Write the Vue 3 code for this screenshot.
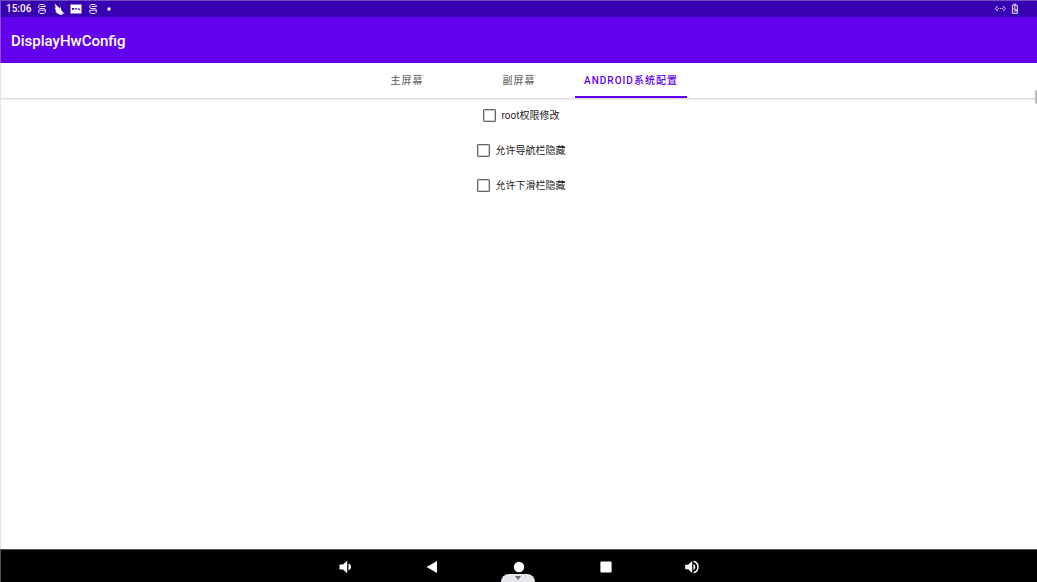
<script setup>
import { ref } from 'vue'

const tabs = ['主屏幕', '副屏幕', 'ANDROID系统配置']
const activeTab = ref(2)
const options = ref([
  { id: 'root', label: 'root权限修改', checked: false },
  { id: 'navbar', label: '允许导航栏隐藏', checked: false },
  { id: 'dropdown', label: '允许下滑栏隐藏', checked: false },
])
</script>

<template>
  <div class="screen">
    <div class="status-bar">
      <div class="status-left">
        <span class="clock">15:06</span>
        <svg class="status-icon" viewBox="0 0 12 12" aria-hidden="true">
          <path d="M9.3 4V2.8L8 1.5H4L2.7 2.8V4.6L4 5.5h4l1.3.9v2.8L8 10.5H4L2.7 9.2V7.2H9M4.6 3.5h4.6" />
        </svg>
        <svg class="status-icon solid" viewBox="0 0 12 12" aria-hidden="true">
          <path d="M1.5.6 7 5.6 7.3 3l1 4.3 3.4 3.6-2.9-.6 1.2 1.4H6l.4-.8H4l.8-.9H2.8l1-.8-1.8-.9 1.4-.3-1.7-1.4 1.4.1L1.3 4.5l1.5.3z" />
        </svg>
        <svg class="status-icon solid" viewBox="0 0 12 12" aria-hidden="true">
          <path fill-rule="evenodd" d="M.5 1.5h11v9H.5zM2 5v2.2h.7V6.3h.8v.9h.7V5zm3 0 .8 2.2h.5L7 5h-.7L6 6l-.3-1zm2.9 0v1.4h1.3v.8h.9V5.8H8.8V5z" />
        </svg>
        <svg class="status-icon" viewBox="0 0 12 12" aria-hidden="true">
          <path d="M9.3 4V2.8L8 1.5H4L2.7 2.8V4.6L4 5.5h4l1.3.9v2.8L8 10.5H4L2.7 9.2V7.2H9M4.6 3.5h4.6" />
        </svg>
        <svg class="status-icon solid" viewBox="0 0 12 12" aria-hidden="true">
          <circle cx="5" cy="6" r="1.7" />
        </svg>
      </div>
      <div class="status-right">
        <svg class="status-icon" viewBox="0 0 12 12" aria-hidden="true">
          <path d="M3.8 3 1.3 5.5 3.8 8M8.8 3l2.5 2.5L8.8 8M3.8 5.5h1.1M5.8 5.5h1M7.7 5.5h1.1" />
        </svg>
        <svg class="status-icon" viewBox="0 0 12 12" aria-hidden="true">
          <path d="M4.4 1.2h2.8M3.4 10.3v-8h4.9v8zM6.3 3.2 4.8 6.2h2.1L5.5 9M6.9 6.4l1.8 2.8" />
        </svg>
      </div>
    </div>

    <header class="app-bar">
      <h1>DisplayHwConfig</h1>
    </header>

    <div class="tabs" role="tablist">
      <button
        v-for="(tab, i) in tabs"
        :key="tab"
        type="button"
        role="tab"
        class="tab"
        :class="{ active: activeTab === i }"
        :aria-selected="activeTab === i"
        @click="activeTab = i"
      >{{ tab }}</button>
    </div>

    <main class="content">
      <label v-for="option in options" :key="option.id" class="option" :for="option.id">
        <input :id="option.id" v-model="option.checked" type="checkbox" />
        <span>{{ option.label }}</span>
      </label>
      <span class="edge-handle"></span>
    </main>

    <nav class="nav-bar">
      <button type="button" aria-label="Volume down">
        <svg viewBox="0 0 18 18"><path d="M3.5 6.5H7L11.2 2.7v12.6L7 11.5H3.5zM12.5 5.6c3.4 1 3.4 5.8 0 6.8z" /></svg>
      </button>
      <button type="button" aria-label="Back">
        <svg viewBox="0 0 18 18"><path d="M14 3v12L3.5 9z" /></svg>
      </button>
      <button type="button" aria-label="Home">
        <svg viewBox="0 0 18 18"><circle cx="9" cy="9" r="5.2" /></svg>
      </button>
      <button type="button" aria-label="Recent apps">
        <svg viewBox="0 0 18 18"><rect x="3.4" y="3.6" width="11.2" height="11" rx="1" /></svg>
      </button>
      <button type="button" aria-label="Volume up">
        <svg viewBox="0 0 18 18">
          <path d="M1.2 6.8h3L8.2 3v12l-4-3.8h-3zM9.4 6c2.6 1 2.6 5 0 6z" />
          <path class="wave" d="M9.6 3.3c5.8 1.6 5.8 9.8 0 11.4" />
        </svg>
      </button>
      <button type="button" class="pull-tab" aria-label="Hide navigation">
        <svg viewBox="0 0 8 6"><path d="M1 1h6L4 5z" /></svg>
      </button>
    </nav>
  </div>
</template>

<style>
body {
  margin: 0;
}
</style>

<style scoped>
.screen {
  box-sizing: border-box;
  display: flex;
  flex-direction: column;
  min-height: 100vh;
  background: #fff;
  color: #222;
  font-family: Roboto, "Noto Sans CJK SC", sans-serif;
  font-size: 10px;
}

.status-bar {
  box-sizing: border-box;
  display: flex;
  align-items: center;
  justify-content: space-between;
  height: 17px;
  padding: 0 16px 0 5px;
  border-top: 1px solid #6e4fc0;
  border-left: 1px solid #6e4fc0;
  background: #3700b3;
  color: #fff;
}

.status-left {
  display: flex;
  align-items: center;
  gap: 5px;
}

.status-right {
  display: flex;
  align-items: center;
  gap: 3px;
}

.clock {
  font-weight: 500;
  line-height: 16px;
}

.status-icon {
  width: 12px;
  height: 12px;
  fill: none;
  stroke: #ebe5f7;
  stroke-width: 1;
}

.status-icon.solid {
  fill: #fff;
  stroke: none;
}

.app-bar {
  box-sizing: border-box;
  display: flex;
  align-items: center;
  height: 46px;
  padding: 2px 10px 0;
  border-left: 1px solid #8a4df3;
  background: #6200ee;
}

h1 {
  margin: 0;
  color: #fff;
  font-size: 15px;
  font-weight: 500;
  line-height: 20px;
}

.tabs {
  position: relative;
  display: flex;
  justify-content: center;
  height: 35px;
  border-left: 1px solid #e2e2e2;
  background: #fff;
  box-shadow: 0 1px 2px rgba(0, 0, 0, 0.2);
}

.tab {
  box-sizing: border-box;
  width: 112px;
  padding: 0;
  border: 0;
  border-bottom: 2px solid transparent;
  background: none;
  color: #737373;
  font: inherit;
  font-weight: 500;
  letter-spacing: 1px;
  white-space: nowrap;
}

.tab.active {
  border-bottom-color: #6200ee;
  color: #6200ee;
}

.content {
  position: relative;
  flex: 1;
  display: flex;
  flex-direction: column;
  align-items: center;
  gap: 1px;
  border-left: 1px solid #e2e2e2;
}

.option {
  display: flex;
  align-items: center;
  gap: 6px;
  height: 34px;
  padding-left: 4px;
  line-height: 16px;
}

.option span {
  padding-top: 1px;
}

.option input {
  appearance: none;
  box-sizing: border-box;
  width: 13px;
  height: 13px;
  margin: 0;
  border: 1px solid #666;
  border-radius: 1px;
  box-shadow: inset 0 0 0 1px #ccc;
}

.option input:checked {
  border-color: #6200ee;
  background: #6200ee;
}

.edge-handle {
  position: absolute;
  top: -8px;
  right: 0;
  width: 2px;
  height: 14px;
  border-radius: 2px 0 0 2px;
  background: #bcbcbc;
}

.nav-bar {
  box-sizing: border-box;
  position: relative;
  display: flex;
  align-items: center;
  justify-content: center;
  gap: 15px;
  height: 33px;
  padding-top: 2px;
  border-top: 1px solid #555;
  border-left: 1px solid #555;
  background: #000;
}

.nav-bar button {
  display: flex;
  align-items: center;
  justify-content: center;
  width: 72px;
  height: 30px;
  padding: 0;
  border: 0;
  background: none;
}

.nav-bar svg {
  width: 18px;
  height: 18px;
  fill: #fff;
}

.nav-bar .wave {
  fill: none;
  stroke: #fff;
  stroke-width: 1.5;
}

.nav-bar .pull-tab {
  position: absolute;
  bottom: 0;
  left: 50%;
  width: 34px;
  height: 8px;
  margin-left: -18px;
  border-radius: 10px 10px 0 0;
  background: #e6e6ec;
}

.nav-bar .pull-tab svg {
  width: 8px;
  height: 6px;
  fill: #686a7d;
}
</style>
